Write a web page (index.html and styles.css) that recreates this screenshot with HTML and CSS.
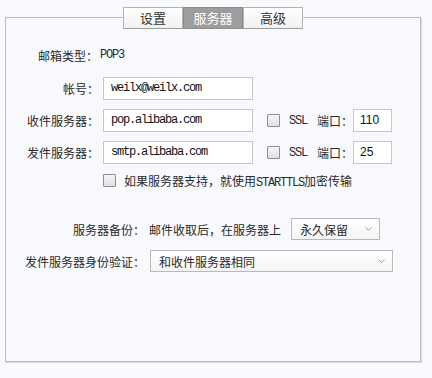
FILE: index.html
```html
<!DOCTYPE html>
<html lang="zh-CN">
<head>
<meta charset="utf-8">
<link rel="stylesheet" href="styles.css">
</head>
<body>
<div class="panel">
  <div class="tabs">
    <div class="tab">设置</div>
    <div class="tab active">服务器</div>
    <div class="tab">高级</div>
  </div>

  <div class="row row-type"><span>邮箱类型：</span><span class="mono">POP3</span></div>

  <div class="row row-field first">
    <span class="label">帐号：</span>
    <div class="input mono">weilx@weilx.com</div>
  </div>

  <div class="row row-field">
    <span class="label">收件服务器：</span>
    <div class="input mono">pop.alibaba.com</div>
    <span class="check"></span>
    <span class="ssl mono">SSL</span>
    <span class="port-label">端口：</span>
    <div class="port">110</div>
  </div>

  <div class="row row-field">
    <span class="label">发件服务器：</span>
    <div class="input mono">smtp.alibaba.com</div>
    <span class="check"></span>
    <span class="ssl mono">SSL</span>
    <span class="port-label">端口：</span>
    <div class="port">25</div>
  </div>

  <div class="row row-tls">
    <span class="check"></span>
    <span class="tls-text">如果服务器支持，就使用<span class="mono">STARTTLS</span>加密传输</span>
  </div>

  <div class="row row-select backup">
    <span class="label-wide">服务器备份：</span>
    <span class="backup-text">邮件收取后，在服务器上</span>
    <div class="select select-short"><span>永久保留</span><svg class="chev" width="7" height="4" viewBox="0 0 7 4"><path d="M0.5 0.5 L3.5 3.5 L6.5 0.5" stroke="#9a9a9a" fill="none"/></svg></div>
  </div>

  <div class="row row-select auth">
    <span class="label-wide">发件服务器身份验证：</span>
    <div class="select select-long"><span>和收件服务器相同</span><svg class="chev" width="7" height="4" viewBox="0 0 7 4"><path d="M0.5 0.5 L3.5 3.5 L6.5 0.5" stroke="#9a9a9a" fill="none"/></svg></div>
  </div>
</div>
</body>
</html>
```
FILE: styles.css
```css
* { box-sizing: border-box; margin: 0; padding: 0; }

body {
  width: 432px;
  height: 378px;
  overflow: hidden;
  background: #f8f9fd;
  font-family: "Noto Sans CJK SC", "Liberation Sans", sans-serif;
  font-size: 12px;
  color: #2a2a2a;
}

.panel {
  margin: 17px 0 0 5px;
  width: 416px;
  height: 345px;
  border: 1px solid #bdbdbd;
  box-shadow: 1px 1px 0 #dcdcdc;
  background: #f8f9fd;
}

.tabs {
  display: flex;
  justify-content: center;
  margin-top: -11px;
  height: 22px;
}

.tab {
  width: 60px;
  height: 22px;
  border: 1px solid #b3b3b3;
  border-bottom-color: #9c9c9c;
  background: linear-gradient(#ffffff, #f1f1f1);
  color: #333;
  font-size: 13px;
  line-height: 19px;
  text-align: center;
}

.tab.active {
  background: #9d9d9d;
  border-color: #8c8c8c;
  color: #ffffff;
}

.mono {
  font-family: "Liberation Mono", monospace;
  font-size: 12px;
  letter-spacing: -1.2px;
}

.row {
  display: flex;
  align-items: center;
}

.row-type {
  margin-top: 18px;
  height: 16px;
  padding-left: 32px;
}

.row-type .mono { margin-left: 2px; }

.row-field {
  height: 23px;
  margin-top: 9px;
}

.row-field.first { margin-top: 14px; }

.label {
  width: 93px;
  text-align: right;
  margin-right: 4px;
}

.input {
  width: 150px;
  height: 23px;
  border: 1px solid #c6c6c6;
  background: #ffffff;
  padding-left: 7px;
  line-height: 21px;
  color: #111;
}

.check {
  display: block;
  width: 13px;
  height: 13px;
  border: 1px solid #8e8e8e;
  border-radius: 1px;
  background: linear-gradient(#f4f4f4, #e2e2e2);
  flex: none;
}

.row-field .check { margin-left: 14px; }

.ssl { margin-left: 9px; }

.port-label { margin-left: 10px; }

.port {
  width: 39px;
  height: 23px;
  border: 1px solid #c6c6c6;
  background: #ffffff;
  padding-left: 6px;
  line-height: 21px;
  font-family: "Liberation Sans", sans-serif;
  font-size: 12px;
  color: #111;
}

.row-tls {
  margin-top: 10px;
  height: 13px;
  padding-left: 97px;
}

.tls-text { margin-left: 8px; }

.row-select { height: 22px; }

.row-select.backup { margin-top: 31px; }
.row-select.auth { margin-top: 10px; }

.label-wide {
  width: 139px;
  text-align: right;
}

.backup-text { margin-left: 4px; }

.select {
  height: 22px;
  border: 1px solid #b9b9b9;
  background: linear-gradient(#ffffff, #f4f4f4);
  display: flex;
  align-items: center;
  justify-content: space-between;
  padding: 0 7px 0 8px;
}

.select-short {
  width: 89px;
  margin-left: 10px;
}

.select-long {
  width: 243px;
  margin-left: 5px;
}

.chev { display: block; }
```
